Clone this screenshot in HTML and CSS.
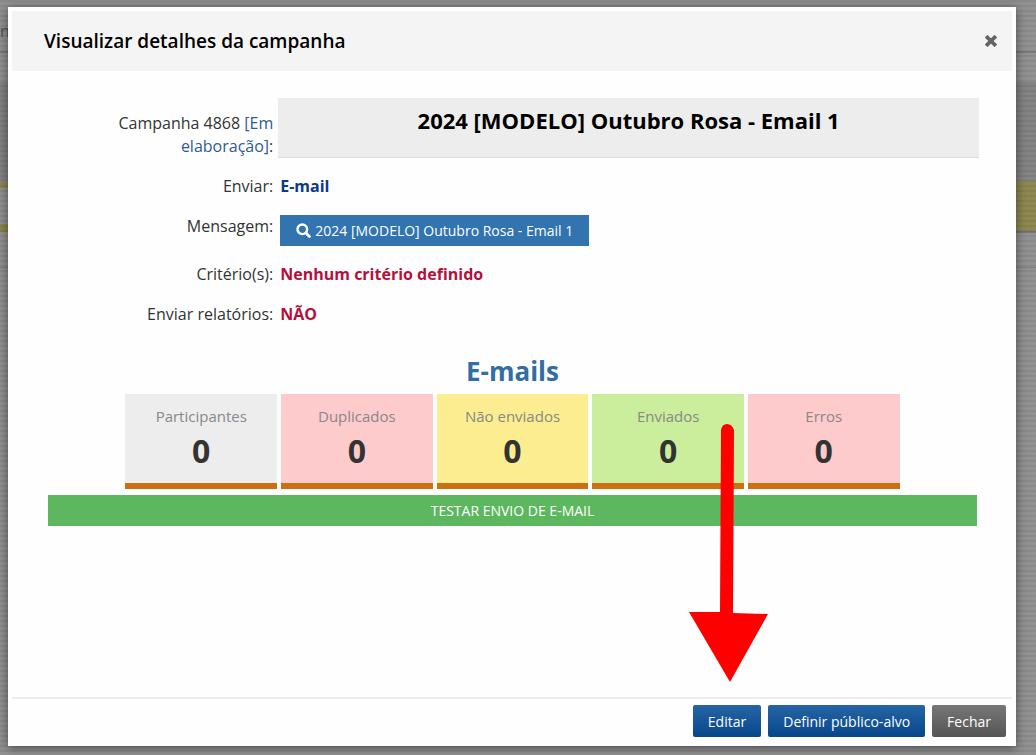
FILE: index.html
```html
<!DOCTYPE html>
<html lang="pt-BR">
<head>
  <meta charset="UTF-8">
  <title>Visualizar detalhes da campanha</title>
  <meta name="viewport" content="width=device-width, initial-scale=1.0">
  <link rel="stylesheet" href="styles.css">
</head>
<body>

  <div class="page-behind" aria-hidden="true">n</div>

  <div class="modal" role="dialog" aria-labelledby="modal-title">
    <header class="modal-header">
      <h1 id="modal-title">Visualizar detalhes da campanha</h1>
      <button type="button" class="close" aria-label="Fechar janela">
        <svg width="12" height="12" viewBox="0 0 12 12"><path d="M2.5 2.5l7 7M9.5 2.5l-7 7" stroke="#646464" stroke-width="3.8" stroke-linecap="square"/></svg>
      </button>
    </header>

    <main class="modal-body">
      <dl class="details">
        <dt class="campaign-label">Campanha 4868 <span>[Em elaboração]</span>:</dt>
        <dd class="campaign-name">2024 [MODELO] Outubro Rosa - Email 1</dd>

        <dt>Enviar:</dt>
        <dd class="blue">E-mail</dd>

        <dt>Mensagem:</dt>
        <dd>
          <button type="button" class="btn-message">
            <svg width="15" height="15" viewBox="0 0 15 15" aria-hidden="true"><circle cx="6.3" cy="6.3" r="4.8" fill="none" stroke="#fff" stroke-width="2.4"/><path d="M10 10l3.4 3.4" stroke="#fff" stroke-width="2.8" stroke-linecap="round"/></svg>
            2024 [MODELO] Outubro Rosa - Email 1
          </button>
        </dd>

        <dt>Critério(s):</dt>
        <dd class="red">Nenhum critério definido</dd>

        <dt>Enviar relatórios:</dt>
        <dd class="red">NÃO</dd>
      </dl>

      <h2>E-mails</h2>

      <ul class="stats">
        <li class="gray">Participantes <strong>0</strong></li>
        <li class="pink">Duplicados <strong>0</strong></li>
        <li class="yellow">Não enviados <strong>0</strong></li>
        <li class="green">Enviados <strong>0</strong></li>
        <li class="pink">Erros <strong>0</strong></li>
      </ul>

      <button type="button" class="btn-test">TESTAR ENVIO DE E-MAIL</button>
    </main>

    <footer class="modal-footer">
      <button type="button" class="btn btn-primary">Editar</button>
      <button type="button" class="btn btn-primary">Definir público-alvo</button>
      <button type="button" class="btn btn-default">Fechar</button>

      <svg class="arrow" width="80" height="260" viewBox="0 0 80 260" aria-hidden="true">
        <path d="M32 8Q33 2 38 2Q43 2 45 8L44 191L79 192L41 260L0 190L31 190Z" fill="#f00"/>
      </svg>
    </footer>
  </div>

</body>
</html>
```

FILE: styles.css
```css
* {
  box-sizing: border-box;
}
body {
  margin: 0;
  padding: 7px 20px 9px 8px;
  min-height: 100vh;
  display: flex;
  font-family: "Open Sans", "Noto Sans", sans-serif;
  font-size: 16px;
  line-height: 23px;
  color: #333;
  background: #8e8e8e;
}
button {
  font: inherit;
  border: 0;
  cursor: pointer;
}

/* page under the overlay */
.page-behind {
  position: absolute;
  inset: 0;
  padding-top: 20px;
  color: #555;
  background:
    repeating-linear-gradient(rgba(0, 0, 0, 0.06) 0 2px, transparent 2px 5px),
    linear-gradient(transparent 182px, #8f8852 182px 188px, transparent 188px 224px, #8f8852 224px 232px, transparent 232px) left / 8px 100% no-repeat,
    linear-gradient(transparent 181px, #8f8852 181px 231px, #777 231px 233px, transparent 233px) right / 20px 100% no-repeat,
    linear-gradient(#929292 51px, #7c7c7c 51px 53px, #929292 53px 82px, #848484 82px 181px, #929292 181px 267px, #808080 267px 268px, #929292 268px);
}

.modal {
  position: relative;
  flex: 1;
  display: flex;
  flex-direction: column;
  padding: 4px;
  background: #fefefe;
  box-shadow: 0 2px 10px rgba(0, 0, 0, 0.5);
}
.modal-header {
  display: flex;
  align-items: center;
  justify-content: space-between;
  height: 60px;
  padding: 0 15px 0 32px;
  background: #f4f4f4;
}
h1 {
  margin: 0;
  font-size: 19px;
  font-weight: 600;
  color: #000;
}
.close {
  display: flex;
  padding: 0;
  background: none;
}

.modal-body {
  flex: 1;
  padding: 27px 35px 0 36px;
}
.details {
  display: grid;
  grid-template-columns: 25% 1fr;
  row-gap: 17px;
  margin: 0 0 29px;
}
dt {
  padding-right: 7px;
  text-align: right;
}
dt span {
  color: #2f5a97;
}
dd {
  margin: 0;
  font-weight: 700;
}
.campaign-label {
  padding-top: 14px;
}
.campaign-name {
  margin: 0 -2px 0 -2px;
  padding-top: 11px;
  font-size: 22px;
  text-align: center;
  color: #000;
  background: #ededed;
  border-bottom: 1px solid #ddd;
}
.blue {
  color: #0d3a85;
}
.red {
  color: #b5103c;
}
.btn-message {
  display: flex;
  align-items: center;
  gap: 4px;
  height: 31px;
  padding: 0 16px;
  font-size: 14px;
  font-weight: 400;
  color: #fff;
  background: #3174af;
}

h2 {
  margin: 0 0 6px;
  font-size: 26px;
  line-height: 33px;
  font-weight: 700;
  text-align: center;
  color: #326da3;
}
.stats {
  display: flex;
  gap: 4px;
  width: 83.33%;
  margin: 0 auto 6px;
  padding: 0;
  list-style: none;
}
.stats li {
  flex: 1;
  height: 95px;
  padding-top: 11px;
  font-size: 15px;
  text-align: center;
  color: #888;
  border-bottom: 6px solid #cc6f10;
}
.stats strong {
  display: block;
  font-size: 32px;
  line-height: 46px;
  color: #333;
}
.stats .gray {
  background: #ededed;
}
.stats .pink {
  background: #fdcbcb;
}
.stats .yellow {
  background: #fded91;
}
.stats .green {
  background: #caee9c;
}
.btn-test {
  display: block;
  width: 100%;
  height: 31px;
  font-size: 14px;
  color: #fff;
  background: #5cb75e;
}

.modal-footer {
  position: relative;
  display: flex;
  justify-content: flex-end;
  gap: 7px;
  padding: 6px 6px 5px;
  border-top: 2px solid #ececec;
}
.btn {
  height: 32px;
  padding: 0 15px;
  font-size: 14px;
  color: #fff;
  border-radius: 2px;
}
.btn-primary {
  background: linear-gradient(#2565a5, #08468a);
}
.btn-default {
  background: linear-gradient(#777, #555);
}
.arrow {
  position: absolute;
  right: 243px;
  bottom: 60px;
}
```
